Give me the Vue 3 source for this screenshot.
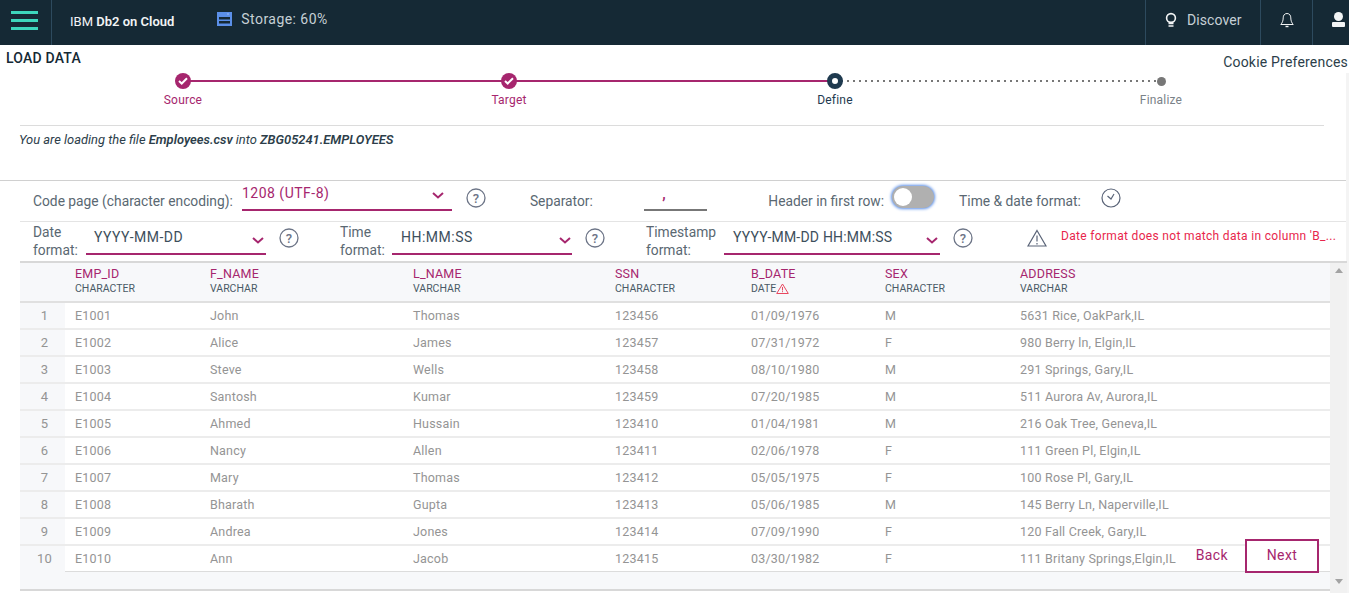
<template>
  <div class="page">
    <header class="topbar">
      <button class="menu-btn" aria-label="menu">
        <span></span><span></span><span></span>
      </button>
      <div class="brand">IBM <b>Db2 on Cloud</b></div>
      <div class="storage">
        <svg width="15" height="14" viewBox="0 0 15 14">
          <rect width="15" height="14" fill="#5b8fe8" />
          <rect x="2" y="5" width="11" height="2.5" fill="#152935" />
          <rect x="2" y="9" width="11" height="2.5" fill="#152935" />
          <rect x="10.5" y="1.5" width="1" height="1" fill="#dfe9fb" />
        </svg>
        <span>Storage: 60%</span>
      </div>
      <div class="top-right">
        <div class="top-cell discover">
          <svg width="12" height="16" viewBox="0 0 12 16" fill="none" stroke="#f2f4f5" stroke-width="1.6">
            <circle cx="6" cy="6" r="4.4" />
            <path d="M3.5 11.5h5M3.5 14h5" />
          </svg>
          <span>Discover</span>
        </div>
        <div class="top-cell bell">
          <svg width="14" height="16" viewBox="0 0 14 16" fill="none" stroke="#f2f4f5" stroke-width="1">
            <path d="M7 1.5c-2.6 0-3.8 2-3.8 4.4 0 3-1 5-2.4 6.6h12.4c-1.4-1.6-2.4-3.6-2.4-6.6 0-2.4-1.2-4.4-3.8-4.4z" />
            <path d="M5.5 14.5h3" stroke-width="1.4" />
          </svg>
        </div>
        <div class="top-cell user">
          <svg width="15" height="15" viewBox="0 0 15 15" fill="#f2f4f5">
            <circle cx="7.5" cy="4.5" r="4.5" />
            <rect x="1" y="10" width="13" height="5" rx="1" />
          </svg>
        </div>
      </div>
    </header>

    <main class="content">
      <h1 class="title">LOAD DATA</h1>
      <a class="cookie">Cookie Preferences</a>
      <div class="page-scroll"></div>

      <div class="wizard">
        <div class="steps">
          <div v-for="(s, i) in steps" :key="s.name" class="step" :class="s.state">
            <div class="track">
              <span class="seg left" v-if="i > 0"></span>
              <span class="seg right" v-if="i < steps.length - 1"></span>
              <span class="dot">
                <svg v-if="s.state === 'done'" width="10" height="8" viewBox="0 0 10 8" fill="none" stroke="#fff" stroke-width="2">
                  <path d="M1 4l2.7 2.5L9 1.2" />
                </svg>
              </span>
            </div>
            <div class="step-name">{{ s.name }}</div>
          </div>
        </div>
        <p class="loading">You are loading the file <b>Employees.csv</b> into <b>ZBG05241.EMPLOYEES</b></p>
      </div>

      <div class="opts row-one">
        <label class="lbl code-lbl">Code page (character encoding):</label>
        <div class="select code-sel"><span>1208 (UTF-8)</span><svg class="chev" width="12" height="7" viewBox="0 0 12 7" fill="none" stroke="#a6266e" stroke-width="2"><path d="M1 1l5 4.5L11 1" /></svg></div>
        <svg class="help" width="20" height="20" viewBox="0 0 20 20"><circle cx="10" cy="10" r="9" fill="none" stroke="#6d7587" stroke-width="1.3" /><text x="10" y="14.5" text-anchor="middle" class="q">?</text></svg>
        <label class="lbl sep-lbl">Separator:</label>
        <div class="sep-input">,</div>
        <label class="lbl head-lbl">Header in first row:</label>
        <div class="toggle"><span></span></div>
        <label class="lbl time-lbl">Time &amp; date format:</label>
        <svg class="clock" width="20" height="20" viewBox="0 0 20 20" fill="none" stroke="#5a6478" stroke-width="1.2"><circle cx="10" cy="10" r="9" /><path d="M6.5 8l3.5 3 3-5" /></svg>
      </div>

      <div class="opts row-two">
        <label class="lbl two date-lbl">Date format:</label>
        <div class="select date-sel"><span>YYYY-MM-DD</span><svg class="chev" width="12" height="7" viewBox="0 0 12 7" fill="none" stroke="#a6266e" stroke-width="2"><path d="M1 1l5 4.5L11 1" /></svg></div>
        <svg class="help" width="20" height="20" viewBox="0 0 20 20"><circle cx="10" cy="10" r="9" fill="none" stroke="#6d7587" stroke-width="1.3" /><text x="10" y="14.5" text-anchor="middle" class="q">?</text></svg>
        <label class="lbl two time-fmt-lbl">Time format:</label>
        <div class="select time-sel"><span>HH:MM:SS</span><svg class="chev" width="12" height="7" viewBox="0 0 12 7" fill="none" stroke="#a6266e" stroke-width="2"><path d="M1 1l5 4.5L11 1" /></svg></div>
        <svg class="help" width="20" height="20" viewBox="0 0 20 20"><circle cx="10" cy="10" r="9" fill="none" stroke="#6d7587" stroke-width="1.3" /><text x="10" y="14.5" text-anchor="middle" class="q">?</text></svg>
        <label class="lbl two ts-lbl">Timestamp format:</label>
        <div class="select ts-sel"><span>YYYY-MM-DD HH:MM:SS</span><svg class="chev" width="12" height="7" viewBox="0 0 12 7" fill="none" stroke="#a6266e" stroke-width="2"><path d="M1 1l5 4.5L11 1" /></svg></div>
        <svg class="help" width="20" height="20" viewBox="0 0 20 20"><circle cx="10" cy="10" r="9" fill="none" stroke="#6d7587" stroke-width="1.3" /><text x="10" y="14.5" text-anchor="middle" class="q">?</text></svg>
        <svg class="warn" width="20" height="18" viewBox="0 0 20 18" fill="none" stroke="#5a6478" stroke-width="1.2"><path d="M10 1.5L19 17H1z" /><path d="M10 6.5v6M10 14v1.5" /></svg>
        <div class="err">Date format does not match data in column 'B_...</div>
      </div>

      <div class="grid-wrap">
        <div class="grid">
          <table>
            <colgroup>
              <col v-for="w in widths" :key="w" :style="{ width: w + 'px' }" />
            </colgroup>
            <thead>
              <tr>
                <th class="idx"></th>
                <th v-for="c in columns" :key="c.name">
                  <div class="col-name">{{ c.name }}</div>
                  <div class="col-type">{{ c.type }}<svg v-if="c.warn" width="13" height="11" viewBox="0 0 13 11" fill="none" stroke="#e8475f" stroke-width="1"><path d="M6.5 1L12.3 10.5H.7z" /><path d="M6.5 4v3.5M6.5 8.2v1" /></svg></div>
                </th>
              </tr>
            </thead>
            <tbody>
              <tr v-for="(r, i) in rows" :key="r[0]">
                <td class="idx">{{ i + 1 }}</td>
                <td v-for="(v, j) in r" :key="j">{{ v }}</td>
              </tr>
            </tbody>
          </table>
          <div class="grid-foot"></div>
        </div>
        <div class="scrollbar">
          <span class="arrow up"></span>
          <span class="arrow down"></span>
        </div>
        <div class="actions">
          <a class="back">Back</a>
          <a class="next">Next</a>
        </div>
      </div>
    </main>
  </div>
</template>

<script setup>
const steps = [
  { name: 'Source', state: 'done' },
  { name: 'Target', state: 'done' },
  { name: 'Define', state: 'current' },
  { name: 'Finalize', state: 'todo' }
]

const widths = [45, 135, 203, 202, 136, 134, 135, 320]

const columns = [
  { name: 'EMP_ID', type: 'CHARACTER' },
  { name: 'F_NAME', type: 'VARCHAR' },
  { name: 'L_NAME', type: 'VARCHAR' },
  { name: 'SSN', type: 'CHARACTER' },
  { name: 'B_DATE', type: 'DATE', warn: true },
  { name: 'SEX', type: 'CHARACTER' },
  { name: 'ADDRESS', type: 'VARCHAR' }
]

const rows = [
  ['E1001', 'John', 'Thomas', '123456', '01/09/1976', 'M', '5631 Rice, OakPark,IL'],
  ['E1002', 'Alice', 'James', '123457', '07/31/1972', 'F', '980 Berry ln, Elgin,IL'],
  ['E1003', 'Steve', 'Wells', '123458', '08/10/1980', 'M', '291 Springs, Gary,IL'],
  ['E1004', 'Santosh', 'Kumar', '123459', '07/20/1985', 'M', '511 Aurora Av, Aurora,IL'],
  ['E1005', 'Ahmed', 'Hussain', '123410', '01/04/1981', 'M', '216 Oak Tree, Geneva,IL'],
  ['E1006', 'Nancy', 'Allen', '123411', '02/06/1978', 'F', '111 Green Pl, Elgin,IL'],
  ['E1007', 'Mary', 'Thomas', '123412', '05/05/1975', 'F', '100 Rose Pl, Gary,IL'],
  ['E1008', 'Bharath', 'Gupta', '123413', '05/06/1985', 'M', '145 Berry Ln, Naperville,IL'],
  ['E1009', 'Andrea', 'Jones', '123414', '07/09/1990', 'F', '120 Fall Creek, Gary,IL'],
  ['E1010', 'Ann', 'Jacob', '123415', '03/30/1982', 'F', '111 Britany Springs,Elgin,IL']
]
</script>

<style>
html, body {
  margin: 0;
  background: #fff;
  overflow: hidden;
}
</style>

<style scoped>
.page {
  width: 1349px;
  height: 593px;
  overflow: hidden;
  font-family: Roboto, "Open Sans", sans-serif;
  font-size: 14px;
  color: #152935;
}

.topbar {
  display: flex;
  align-items: center;
  height: 45px;
  background: #152935;
  color: #dfe3e6;
}
.menu-btn {
  display: flex;
  flex-direction: column;
  justify-content: center;
  gap: 5px;
  width: 52px;
  height: 45px;
  padding: 0 13px 5px 11px;
  background: none;
  border: 0;
  border-right: 1px solid #2d4a5e;
  box-sizing: border-box;
}
.menu-btn span {
  height: 3px;
  background: #3dd6bc;
}
.brand {
  margin-left: 18px;
  padding-bottom: 2px;
  font-size: 13px;
  color: #f2f4f5;
}
.brand b {
  font-weight: 600;
}
.storage {
  display: flex;
  align-items: center;
  gap: 9px;
  margin-left: 43px;
  padding-bottom: 7px;
  font-size: 14px;
  letter-spacing: 0.45px;
  color: #c6d0d6;
}
.top-right {
  display: flex;
  margin-left: auto;
  height: 45px;
}
.top-cell {
  display: flex;
  align-items: center;
  height: 45px;
  box-sizing: border-box;
  padding-bottom: 5px;
  border-left: 1px solid #2d4a5e;
}
.discover {
  width: 115px;
  padding-left: 19px;
  gap: 10px;
  color: #c6d0d6;
  font-size: 14px;
  letter-spacing: 0.1px;
}
.bell {
  width: 52px;
  justify-content: center;
}
.user {
  width: 37px;
  padding-left: 18px;
  padding-bottom: 6px;
  overflow: hidden;
}

.content {
  position: relative;
  height: 548px;
}
.title {
  margin: 0;
  padding: 5px 0 0 6px;
  font-size: 14px;
  line-height: 17px;
  font-weight: 500;
  letter-spacing: 0.2px;
  color: #152935;
}
.cookie {
  position: absolute;
  top: 9px;
  right: 1px;
  font-size: 14px;
  letter-spacing: 0.2px;
  color: #2c3e4a;
}
.page-scroll {
  position: absolute;
  top: 28px;
  right: 0;
  bottom: 0;
  width: 3px;
  background: #f4f4f4;
}

.wizard {
  height: 113px;
  margin: 0 20px;
  width: 1304px;
}
.steps {
  display: grid;
  grid-template-columns: repeat(4, 1fr);
  height: 52px;
  padding-top: 6px;
  border-bottom: 1px solid #dcdcdc;
}
.track {
  position: relative;
  height: 16px;
  display: flex;
  justify-content: center;
  align-items: center;
}
.seg {
  position: absolute;
  top: 7px;
  height: 2px;
  width: 50%;
  background: #a6266e;
}
.seg.left {
  left: 0;
}
.seg.right {
  left: 50%;
}
.dot {
  position: relative;
  display: flex;
  align-items: center;
  justify-content: center;
  width: 16px;
  height: 16px;
  border-radius: 50%;
  background: #a6266e;
}
.current .dot {
  box-sizing: border-box;
  background: #fff;
  border: 5px solid #1f3a4f;
}
.current .seg.right,
.todo .seg.left {
  background: repeating-linear-gradient(90deg, #777 0 2px, transparent 2px 6px);
}
.todo .dot {
  width: 9px;
  height: 9px;
  background: #777;
}
.step-name {
  margin-top: 3px;
  text-align: center;
  font-size: 12px;
  line-height: 16px;
  letter-spacing: 0.2px;
}
.done .step-name {
  color: #a6266e;
}
.current .step-name {
  color: #1f3a4f;
}
.todo .step-name {
  color: #7a8288;
}
.loading {
  margin: 6px 0 0 -1px;
  font-size: 12.9px;
  line-height: 16px;
  font-style: italic;
  color: #2c3e4a;
}
.loading b {
  font-weight: 600;
}

.opts {
  display: flex;
  align-items: center;
  box-sizing: border-box;
  margin-right: 3px;
}
.row-one {
  height: 41px;
  padding-left: 33px;
  border-top: 1px solid #d0d0d0;
}
.row-two {
  height: 40px;
  margin-left: 20px;
  padding-left: 13px;
  border-top: 1px solid #e4e4e4;
}
.lbl {
  color: #5a6872;
  font-size: 13.8px;
  flex: none;
}
.lbl.two {
  line-height: 18px;
  padding-bottom: 2px;
}
.select {
  display: flex;
  align-items: center;
  justify-content: space-between;
  box-sizing: border-box;
  height: 32px;
  flex: none;
  padding: 0 2px 2px 8px;
  margin-bottom: 5px;
  border-bottom: 2px solid #a6266e;
  font-size: 14px;
  letter-spacing: 0.5px;
  color: #3d4f5c;
}
.select .chev {
  margin-top: 6px;
}
.code-sel {
  width: 210px;
  height: 28px;
  margin-left: 9px;
  margin-bottom: 8px;
  padding: 0 8px 6px 0;
  color: #a6266e;
}
.code-sel .chev {
  margin-top: 4px;
}
.sep-lbl {
  margin-left: 44px;
}
.sep-input {
  width: 63px;
  height: 26px;
  margin-left: 51.5px;
  margin-bottom: 6px;
  padding: 2px 0 0 18px;
  box-sizing: border-box;
  border-bottom: 2px solid #777;
  color: #a6266e;
  font-weight: 700;
  line-height: 14px;
}
.head-lbl {
  margin-left: 61px;
}
.toggle {
  box-sizing: border-box;
  flex: none;
  width: 42px;
  height: 22px;
  margin-left: 8px;
  margin-bottom: 8px;
  padding: 2px;
  border-radius: 11px;
  background: #b0b0b0;
  box-shadow: 0 0 3px 1px #5b8fe8;
}
.toggle span {
  display: block;
  width: 18px;
  height: 18px;
  border-radius: 50%;
  background: #fff;
}
.time-lbl {
  margin-left: 25px;
}
.clock {
  margin-left: 20px;
  margin-bottom: 6px;
  flex: none;
}
.help {
  flex: none;
  margin-left: 14px;
  margin-bottom: 6px;
}
.row-two .help {
  margin-left: 13px;
  margin-bottom: 7px;
}
.q {
  font-size: 13px;
  fill: #6d7587;
  font-weight: 500;
}
.date-lbl {
  width: 53px;
}
.date-sel {
  width: 180px;
}
.time-fmt-lbl {
  width: 47px;
  margin-left: 41px;
}
.time-sel {
  width: 180px;
  margin-left: 5px;
  padding-left: 9px;
  padding-right: 1px;
}
.ts-lbl {
  width: 78px;
  margin-left: 41px;
}
.ts-sel {
  width: 216px;
  padding-left: 9px;
  letter-spacing: 0.2px;
}
.warn {
  flex: none;
  margin-left: 54px;
  margin-bottom: 7px;
}
.err {
  margin-left: 14px;
  margin-bottom: 11px;
  color: #e8264c;
  font-size: 12px;
  letter-spacing: 0.325px;
  white-space: nowrap;
}

.grid-wrap {
  position: relative;
  display: flex;
  margin: 0 2px 0 20px;
  height: 332px;
  border-top: 2px solid #d8d8d8;
  box-sizing: border-box;
}
.grid {
  width: 1310px;
}
table {
  width: 1310px;
  table-layout: fixed;
  border-collapse: collapse;
}
th {
  height: 35px;
  padding: 0 0 3px 10px;
  background: #f7f8fa;
  text-align: left;
  font-weight: 400;
  border-bottom: 2px solid #e0e0e0;
}
.col-name {
  font-size: 12.5px;
  line-height: 15px;
  letter-spacing: 0.2px;
  color: #a6266e;
}
.col-type {
  display: flex;
  align-items: center;
  font-size: 10.5px;
  line-height: 15px;
  color: #4a5a66;
}
td {
  height: 25px;
  padding: 0 0 0 10px;
  font-size: 12.5px;
  letter-spacing: 0.2px;
  color: #949494;
  border-bottom: 2px solid #ececec;
  white-space: nowrap;
}
td.idx {
  padding: 0 0 0 4px;
  text-align: center;
  background: #f7f8fa;
  color: #949494;
  font-size: 13px;
}
th.idx {
  padding: 0;
}
tbody tr:last-child td {
  border-bottom: 1px solid #dcdcdc;
}
tbody tr:last-child td.idx {
  border-bottom: 0;
}
.grid-foot {
  height: 17px;
  background: #f7f8fa;
  border-bottom: 2px solid #d8d8d8;
}
.scrollbar {
  position: relative;
  width: 17px;
  background: #f1f1f1;
}
.arrow {
  position: absolute;
  left: 5px;
  width: 0;
  height: 0;
  border-left: 4px solid transparent;
  border-right: 4px solid transparent;
}
.arrow.up {
  top: 5px;
  border-bottom: 5px solid #a3a3a3;
}
.arrow.down {
  bottom: 9px;
  border-top: 5px solid #a3a3a3;
}
.actions {
  position: absolute;
  right: 28px;
  bottom: 20px;
  display: flex;
  align-items: center;
  gap: 17px;
}
.back {
  color: #a6266e;
  font-size: 14px;
  letter-spacing: 0.4px;
  padding-bottom: 2px;
}
.next {
  display: block;
  box-sizing: border-box;
  width: 74px;
  height: 34px;
  line-height: 28px;
  text-align: center;
  border: 2px solid #a6266e;
  background: #fff;
  color: #a6266e;
  font-size: 14px;
  letter-spacing: 0.4px;
}
</style>
